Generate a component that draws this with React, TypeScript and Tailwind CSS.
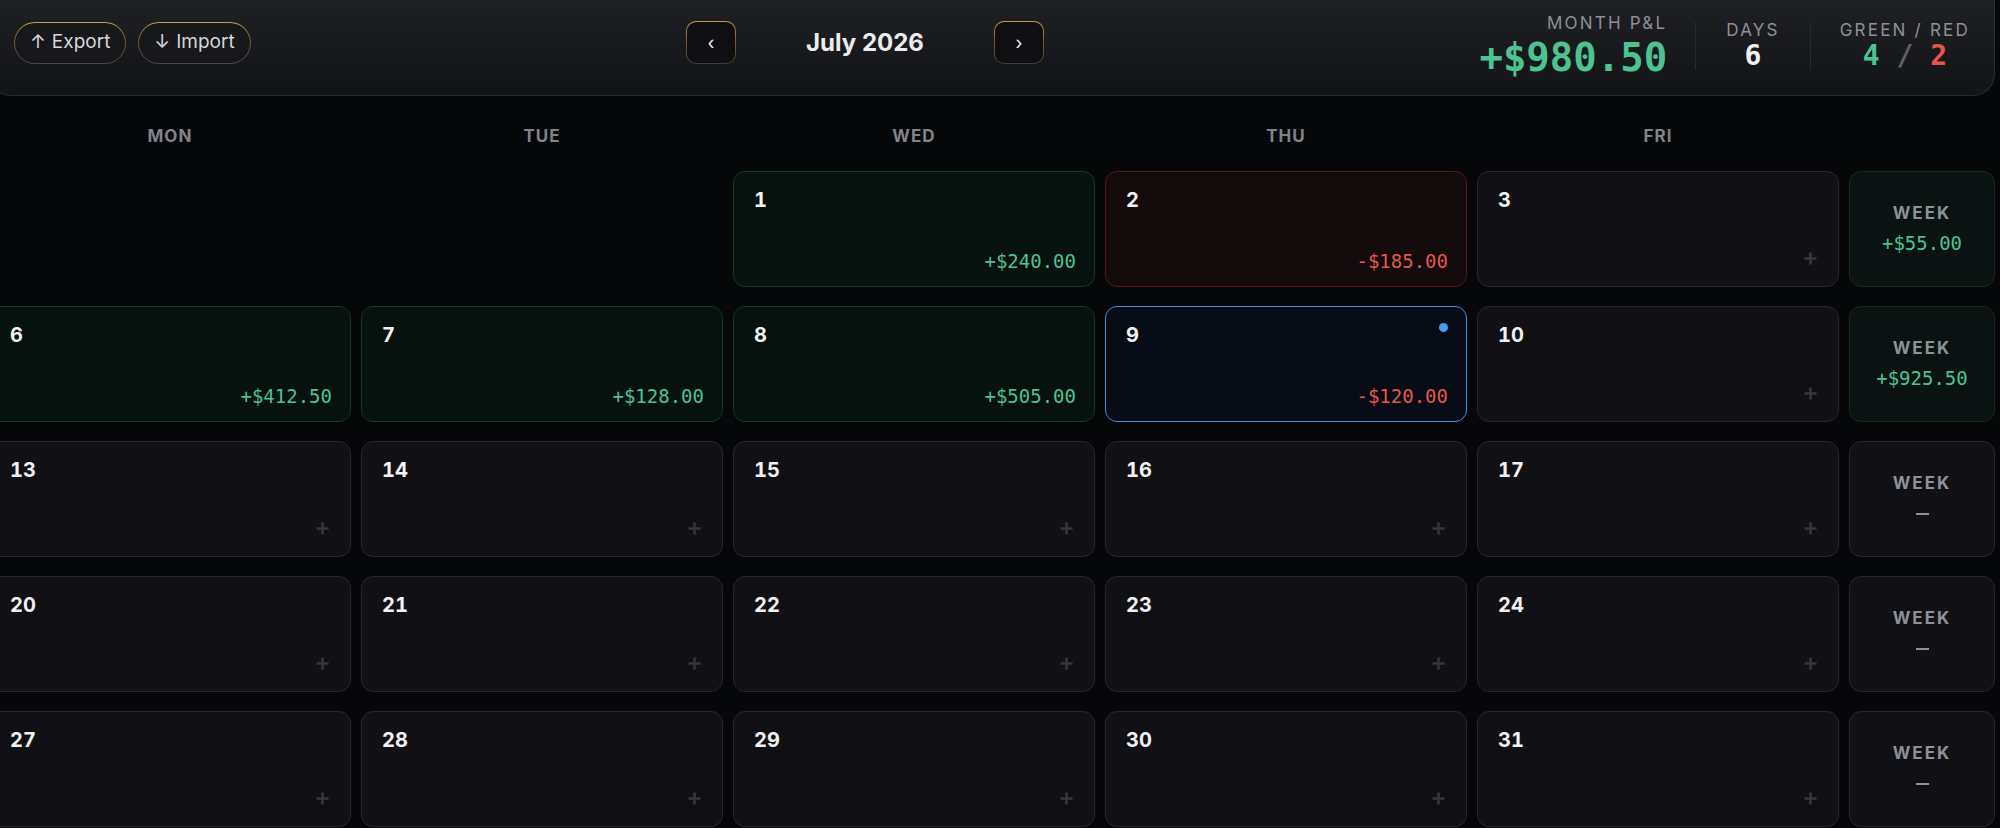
import React from "react"

type Day = { d: number; pnl?: number; today?: boolean } | null

interface Week {
  days: Day[]
  total?: number
}

const weeks: Week[] = [
  { days: [null, null, { d: 1, pnl: 240 }, { d: 2, pnl: -185 }, { d: 3 }], total: 55 },
  {
    days: [{ d: 6, pnl: 412.5 }, { d: 7, pnl: 128 }, { d: 8, pnl: 505 }, { d: 9, pnl: -120, today: true }, { d: 10 }],
    total: 925.5,
  },
  { days: [{ d: 13 }, { d: 14 }, { d: 15 }, { d: 16 }, { d: 17 }] },
  { days: [{ d: 20 }, { d: 21 }, { d: 22 }, { d: 23 }, { d: 24 }] },
  { days: [{ d: 27 }, { d: 28 }, { d: 29 }, { d: 30 }, { d: 31 }] },
]

const mono = "font-['DejaVu_Sans_Mono',monospace]"
const sans = "font-['Inter','Liberation_Sans',sans-serif]"
const grid = "grid grid-cols-[362px_362px_362px_362px_362px_146px] gap-x-[10px]"

const fmt = (v: number) => `${v >= 0 ? "+" : "-"}$${Math.abs(v).toFixed(2)}`

const goldPill =
  "border border-transparent [background:linear-gradient(#17181c,#17181c)_padding-box,linear-gradient(180deg,#c79a48,#7a5a28_45%,#4a4540_100%)_border-box]"
const goldSquare =
  "border border-transparent [background:linear-gradient(#0f0f13,#0f0f13)_padding-box,linear-gradient(180deg,#c79a48,#7a5a28_50%,#3f3a33_100%)_border-box]"

function Plus() {
  return (
    <svg width="13" height="13" viewBox="0 0 13 13" className="absolute bottom-[21px] right-[21px]">
      <path d="M6.5 0.5v12M0.5 6.5h12" stroke="#36373d" strokeWidth="2.6" />
    </svg>
  )
}

function DayCell({ day }: { day: Day }) {
  if (!day) return <div className="h-[116px]" />

  let tone = "bg-[#111115] border-[#26272c]"
  if (day.today) tone = "bg-[#060b15] border-[#3f8fe6] border-[1.5px]"
  else if (day.pnl !== undefined && day.pnl >= 0) tone = "bg-[#07110e] border-[#0f3a2a]"
  else if (day.pnl !== undefined) tone = "bg-[#120a0b] border-[#51191a]"

  return (
    <div className={`relative flex h-[116px] flex-col justify-between rounded-xl border ${tone} pb-[15px] pl-5 pr-[18px] pt-[18px]`}>
      <div className={`${sans} text-[20px] font-bold tabular-nums leading-none text-[#f1f1f2]`}>{day.d}</div>
      {day.today && <div className="absolute right-[18px] top-[16px] h-[9px] w-[9px] rounded-full bg-[#4a9bf0]" />}
      {day.pnl !== undefined ? (
        <div
          className={`${mono} self-end text-[19px] leading-none ${day.pnl >= 0 ? "text-[#4cc390]" : "text-[#e5564e]"}`}
        >
          {fmt(day.pnl)}
        </div>
      ) : (
        <Plus />
      )}
    </div>
  )
}

function WeekCell({ total }: { total?: number }) {
  const tone = total !== undefined ? "bg-[#0a1311] border-[#1b2622]" : "bg-[#111115] border-[#26272c]"
  return (
    <div className={`flex h-[116px] flex-col items-center justify-center gap-[12px] rounded-xl border ${tone}`}>
      <div className={`${sans} text-[17px] font-bold leading-none tracking-[0.12em] text-[#8e9197]`}>WEEK</div>
      {total !== undefined ? (
        <div className={`${mono} text-[19px] leading-none text-[#4cc390]`}>{fmt(total)}</div>
      ) : (
        <div className="flex h-[19px] items-center">
          <div className="h-[2px] w-[13px] bg-[#8e9197]" />
        </div>
      )}
    </div>
  )
}

export default function App() {
  return (
    <div className={`h-[828px] w-full overflow-hidden bg-[#060709] ${sans}`}>
      <div className="ml-[-11px] w-[2006px]">
        <header className="flex h-[96px] items-center justify-between rounded-b-[22px] border border-t-0 border-[#2b2c31] bg-[linear-gradient(180deg,#1f2024,#131418)] px-6 pb-[10px]">
          <div className="flex items-center gap-3">
            <button className={`flex h-[42px] items-center gap-[6px] rounded-full px-[15px] text-[19px] text-[#d6d6d8] ${goldPill}`}>
              <span>↑</span>
              <span>Export</span>
            </button>
            <button className={`flex h-[42px] items-center gap-[6px] rounded-full px-[15px] text-[19px] text-[#d6d6d8] ${goldPill}`}>
              <span>↓</span>
              <span>Import</span>
            </button>
          </div>

          <div className="flex items-center">
            <button className={`flex h-[43px] w-[50px] items-center justify-center rounded-[10px] text-[18px] text-[#f0f0f0] ${goldSquare}`}>
              ‹
            </button>
            <div className="w-[258px] text-center text-[24px] font-bold text-[#ececee]">July 2026</div>
            <button className={`flex h-[43px] w-[50px] items-center justify-center rounded-[10px] text-[18px] text-[#f0f0f0] ${goldSquare}`}>
              ›
            </button>
          </div>

          <div className="mt-[6px] flex items-center">
            <div className="flex flex-col items-end pr-[28px]">
              <div className="text-[17px] leading-none tracking-[0.13em] text-[#8d9096]">MONTH P&amp;L</div>
              <div className={`${mono} mt-[6px] text-[39px] font-bold leading-none text-[#4cc390]`}>+$980.50</div>
            </div>
            <div className="flex h-[48px] flex-col items-center justify-between border-l border-[#2a2b30] px-[30px]">
              <div className="text-[17px] leading-none tracking-[0.13em] text-[#8d9096]">DAYS</div>
              <div className={`${mono} text-[28px] font-bold leading-none text-[#f1f1f2]`}>6</div>
            </div>
            <div className="flex h-[48px] flex-col items-center justify-between border-l border-[#2a2b30] pl-[29px]">
              <div className="text-[17px] leading-none tracking-[0.13em] text-[#8d9096]">GREEN / RED</div>
              <div className={`${mono} text-[28px] font-bold leading-none`}>
                <span className="text-[#4cc390]">4</span>
                <span className="text-[#5d6066]"> / </span>
                <span className="text-[#e5564e]">2</span>
              </div>
            </div>
          </div>
        </header>

        <div className={`${grid} mb-[13px] mt-5 h-[42px] items-center`}>
          {["MON", "TUE", "WED", "THU", "FRI"].map((d) => (
            <div key={d} className="text-center text-[17px] font-bold tracking-[0.06em] text-[#80838a]">
              {d}
            </div>
          ))}
          <div />
        </div>

        <div className="flex flex-col gap-y-[19px]">
          {weeks.map((w, i) => (
            <div key={i} className={grid}>
              {w.days.map((day, j) => (
                <DayCell key={j} day={day} />
              ))}
              <WeekCell total={w.total} />
            </div>
          ))}
        </div>
      </div>
    </div>
  )
}
